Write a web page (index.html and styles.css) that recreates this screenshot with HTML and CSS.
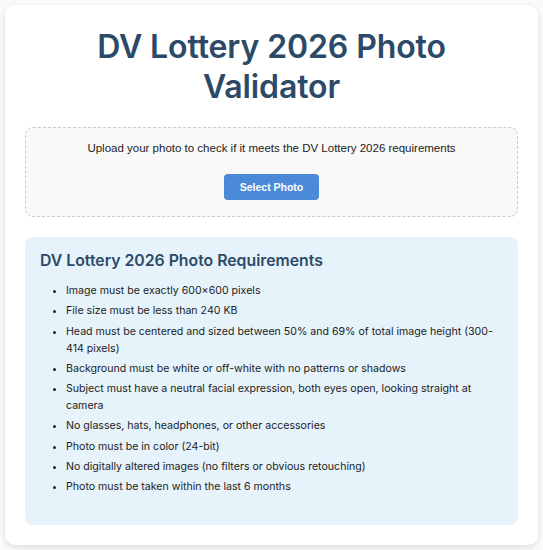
FILE: index.html
```html
<!DOCTYPE html>
<html lang="en">
<head>
  <meta charset="UTF-8">
  <title>DV Lottery 2026 Photo Validator</title>
  <link rel="stylesheet" href="styles.css">
</head>
<body>
  <div class="container">
    <h1>DV Lottery 2026 Photo Validator</h1>

    <div class="upload-box">
      <p>Upload your photo to check if it meets the DV Lottery 2026 requirements</p>
      <button type="button" class="btn">Select Photo</button>
    </div>

    <div class="requirements">
      <h2>DV Lottery 2026 Photo Requirements</h2>
      <ul>
        <li>Image must be exactly 600×600 pixels</li>
        <li>File size must be less than 240 KB</li>
        <li>Head must be centered and sized between 50% and 69% of total image height (300-414 pixels)</li>
        <li>Background must be white or off-white with no patterns or shadows</li>
        <li>Subject must have a neutral facial expression, both eyes open, looking straight at camera</li>
        <li>No glasses, hats, headphones, or other accessories</li>
        <li>Photo must be in color (24-bit)</li>
        <li>No digitally altered images (no filters or obvious retouching)</li>
        <li>Photo must be taken within the last 6 months</li>
      </ul>
    </div>
  </div>
</body>
</html>
```

FILE: styles.css
```css
body {
  font-family: Inter, "Liberation Sans", sans-serif;
  background: #fafafa;
  margin: 0;
  padding: 5px;
  color: #333;
}
.container {
  background: white;
  border-radius: 10px;
  box-shadow: 0 2px 6px rgba(0,0,0,0.12);
  padding: 20px 20px 20px;
}
h1 {
  text-align: center;
  color: #2c4a68;
  font-size: 32px;
  line-height: 40px;
  font-weight: 600;
  margin: 2px 0 20px;
  padding: 0 40px;
  letter-spacing: -0.1px;
}
.upload-box {
  border: 1px dashed #ccc;
  border-radius: 8px;
  background: #f9f9f9;
  padding: 14px 20px 16px;
  text-align: center;
  font-family: "Liberation Sans", Arial, sans-serif;
}
.upload-box p {
  font-size: 11.5px;
  margin: 0 0 20px;
  color: #222;
}
.btn {
  background: #4a8ad8;
  color: white;
  border: none;
  border-radius: 4px;
  font-family: "Liberation Sans", Arial, sans-serif;
  font-size: 10.5px;
  font-weight: bold;
  padding: 0 16px;
  height: 26px;
  cursor: pointer;
}
.requirements {
  margin-top: 20px;
  background: #e6f3fb;
  border-radius: 8px;
  padding: 14px 15px 26px;
}
h2 {
  font-size: 15.8px;
  font-weight: 600;
  color: #2c4a68;
  margin: 0 0 12px;
}
ul {
  margin: 0;
  padding-left: 26px;
  font-size: 10.6px;
  line-height: 17px;
  color: #222;
}
li {
  margin-bottom: 3.3px;
}
```
